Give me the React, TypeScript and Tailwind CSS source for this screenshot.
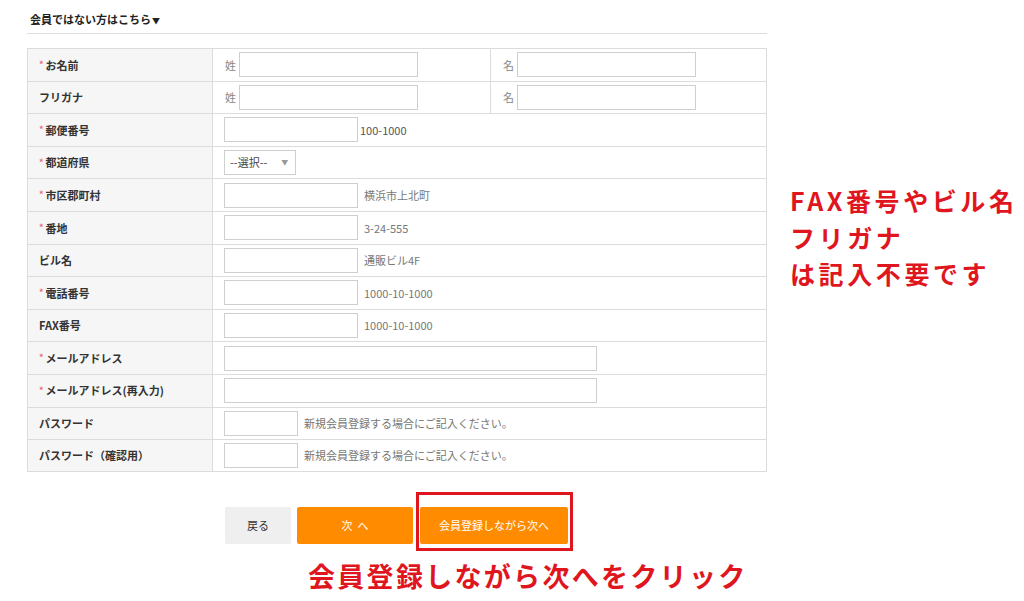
type Row = {
  label: string;
  required?: boolean;
  kind: "name" | "input" | "select";
  inputWidth?: string;
  hint?: string;
  hintGap?: string;
};

const rows: Row[] = [
  { label: "お名前", required: true, kind: "name" },
  { label: "フリガナ", kind: "name" },
  { label: "郵便番号", required: true, kind: "input", inputWidth: "w-[134px]", hint: "100-1000", hintGap: "ml-[2px] text-[#555]" },
  { label: "都道府県", required: true, kind: "select" },
  { label: "市区郡町村", required: true, kind: "input", inputWidth: "w-[134px]", hint: "横浜市上北町" },
  { label: "番地", required: true, kind: "input", inputWidth: "w-[134px]", hint: "3-24-555" },
  { label: "ビル名", kind: "input", inputWidth: "w-[134px]", hint: "通販ビル4F" },
  { label: "電話番号", required: true, kind: "input", inputWidth: "w-[134px]", hint: "1000-10-1000" },
  { label: "FAX番号", kind: "input", inputWidth: "w-[134px]", hint: "1000-10-1000" },
  { label: "メールアドレス", required: true, kind: "input", inputWidth: "w-[373px]" },
  { label: "メールアドレス(再入力)", required: true, kind: "input", inputWidth: "w-[373px]" },
  { label: "パスワード", kind: "input", inputWidth: "w-[74px]", hint: "新規会員登録する場合にご記入ください。" },
  { label: "パスワード（確認用）", kind: "input", inputWidth: "w-[74px]", hint: "新規会員登録する場合にご記入ください。" },
];

const font = { fontFamily: '"Noto Sans CJK JP", "Noto Sans", sans-serif' };

function Box({ className }: { className: string }) {
  return <div className={`h-[25px] border border-[#cfcfcf] bg-white ${className}`} />;
}

function FormRow({ row, last }: { row: Row; last: boolean }) {
  return (
    <div className={`flex h-[32.6px] border-t border-[#dcdcdc] ${last ? "border-b" : ""}`}>
      <div className="flex w-[185px] shrink-0 items-center border-r border-[#dcdcdc] bg-[#f6f6f6] pl-[11px] text-[11px] font-bold text-[#333]">
        {row.required && <span className="mr-[2px] text-[9px] text-[#ec6a7c]">*</span>}
        {row.label}
      </div>
      {row.kind === "name" && (
        <div className="flex flex-1">
          <div className="flex w-[278px] items-center border-r border-[#dcdcdc] pl-[12px]">
            <span className="mr-[3px] text-[11px] text-[#888]">姓</span>
            <Box className="w-[179px]" />
          </div>
          <div className="flex items-center pl-[12px]">
            <span className="mr-[3px] text-[11px] text-[#888]">名</span>
            <Box className="w-[179px]" />
          </div>
        </div>
      )}
      {row.kind === "input" && (
        <div className="flex flex-1 items-center pl-[11px]">
          <Box className={row.inputWidth ?? ""} />
          {row.hint && (
            <span className={`text-[11px] ${row.hintGap ?? "ml-[6px] text-[#777]"}`}>{row.hint}</span>
          )}
        </div>
      )}
      {row.kind === "select" && (
        <div className="flex flex-1 items-center pl-[11px]">
          <div className="flex h-[25px] w-[72px] items-center border border-[#cfcfcf] bg-white pl-[5px] text-[11px] text-[#444]">
            --選択--
            <span className="ml-[14px] text-[7px] text-[#999]">▼</span>
          </div>
        </div>
      )}
    </div>
  );
}

export default function App() {
  return (
    <div className="relative h-[601px] w-[1024px] overflow-hidden bg-white" style={font}>
      <div className="flex">
        <div className="ml-[27px] w-[740px] shrink-0">
          <div className="flex h-[34px] items-end border-b border-[#dedede] pb-[6px] pl-[3px] text-[11px] font-bold text-[#222]">
            会員ではない方はこちら<span className="ml-[1px] text-[8px]">▼</span>
          </div>
          <div className="mt-[14px] border-x border-[#dcdcdc]">
            {rows.map((r, i) => (
              <FormRow key={r.label} row={r} last={i === rows.length - 1} />
            ))}
          </div>

          <div className="ml-[198px] mt-[20px] flex items-end">
            <button className="mb-[7px] h-[37px] w-[66px] rounded-[2px] bg-[#efefef] text-[11px] text-[#333]">
              戻る
            </button>
            <button className="mb-[7px] ml-[6px] h-[37px] w-[116px] rounded-[2px] bg-[#ff8c00] text-[11px] text-white">
              次&nbsp;&nbsp;へ
            </button>
            <div className="ml-[3px] border-[3px] border-[#e0161e] pb-[4px] pl-[1px] pr-[2px] pt-[12px]">
              <button className="h-[37px] w-[148px] rounded-[2px] bg-[#ff8c00] text-[11px] text-white">
                会員登録しながら次へ
              </button>
            </div>
          </div>
          <div className="ml-[281px] mt-[7px] whitespace-nowrap text-[27px] font-bold leading-[36px] tracking-[2.3px] text-[#e0161e]">
            会員登録しながら次へをクリック
          </div>
        </div>
        <div className="ml-[23px] mt-[182px] whitespace-nowrap text-[25px] font-bold leading-[36.5px] tracking-[3.6px] text-[#e0161e]">
          <div>FAX番号やビル名</div>
          <div>フリガナ</div>
          <div>は記入不要です</div>
        </div>
      </div>
    </div>
  );
}
